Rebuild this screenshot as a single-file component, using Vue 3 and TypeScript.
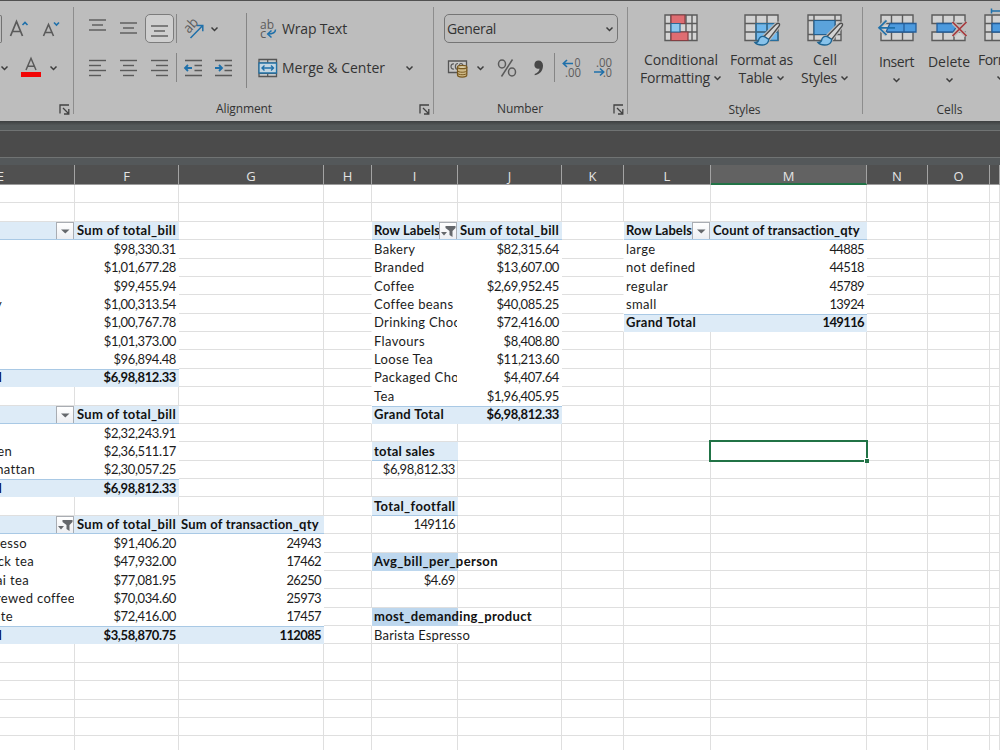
<script setup lang="ts">
type Kind = 'head' | 'body' | 'total' | 'fill' | 'strong'
interface Cell {
  text?: string
  kind?: Kind
  align?: 'right'
  bold?: boolean
  filter?: 'menu' | 'funnel'
  spill?: boolean
  end?: number
  width?: number
}

// Stretches or tightens a label's letter spacing so it fills the given width.
const vFit = {
  mounted(el: HTMLElement, binding: { value?: number }) {
    if (!binding.value || !el.textContent) return
    el.style.letterSpacing = '0'
    const natural = el.getBoundingClientRect().width
    el.style.letterSpacing = `${(binding.value - natural) / el.textContent.trim().length}px`
  },
}

const columns = ['E', 'F', 'G', 'H', 'I', 'J', 'K', 'L', 'M', 'N', 'O', '']
const rowCount = 31
const cells: Record<string, Cell> = {}

function put(col: string, row: number, cell: Cell) {
  cells[col + row] = cell
}

function pivot(first: string, others: string[], top: number, heads: [string, number][], filter: 'menu' | 'funnel', rows: (string | number)[][], total: string[], firstHead = '') {
  put(first, top, { text: firstHead, kind: 'head', filter, width: 66 })
  others.forEach((c, i) => put(c, top, { text: heads[i][0], kind: 'head', width: heads[i][1] }))
  rows.forEach((r, n) => {
    const y = top + 1 + n
    const end = first === 'E' ? Number(r[r.length - 1]) : undefined
    put(first, y, { text: String(r[0]), kind: 'body', end })
    others.forEach((c, i) => put(c, y, { text: String(r[i + 1]), kind: 'body', align: 'right' }))
  })
  const y = top + 1 + rows.length
  put(first, y, { text: total[0], kind: 'total', end: first === 'E' ? 2 : undefined, width: first === 'E' ? undefined : 70 })
  others.forEach((c, i) => put(c, y, { text: total[i + 1], kind: 'total', align: 'right' }))
}

pivot('E', ['F'], 2, [['Sum of total_bill', 99]], 'menu', [
  ['', '$98,330.31', 0], ['', '$1,01,677.28', 0], ['', '$99,455.94', 0], ['y', '$1,00,313.54', 3],
  ['', '$1,00,767.78', 0], ['', '$1,01,373.00', 0], ['', '$96,894.48', 0],
], ['l', '$6,98,812.33'])
pivot('E', ['F'], 12, [['Sum of total_bill', 99]], 'menu', [
  ['', '$2,32,243.91', 0], ['en', '$2,36,511.17', 13], ['hattan', '$2,30,057.25', 36],
], ['l', '$6,98,812.33'])
pivot('E', ['F', 'G'], 18, [['Sum of total_bill', 99], ['Sum of transaction_qty', 138]], 'funnel', [
  ['resso', '$91,406.20', '24943', 28], ['ck tea', '$47,932.00', '17462', 35], ['ai tea', '$77,081.95', '26250', 30],
  ['rewed coffee', '$70,034.60', '25973', 76], ['ate', '$72,416.00', '17457', 14],
], ['l', '$3,58,870.75', '112085'])
pivot('I', ['J'], 2, [['Sum of total_bill', 99]], 'funnel', [
  ['Bakery', '$82,315.64'], ['Branded', '$13,607.00'], ['Coffee', '$2,69,952.45'], ['Coffee beans', '$40,085.25'],
  ['Drinking Choc', '$72,416.00'], ['Flavours', '$8,408.80'], ['Loose Tea', '$11,213.60'],
  ['Packaged Cho', '$4,407.64'], ['Tea', '$1,96,405.95'],
], ['Grand Total', '$6,98,812.33'], 'Row Labels')
pivot('L', ['M'], 2, [['Count of transaction_qty', 147]], 'menu', [
  ['large', '44885'], ['not defined', '44518'], ['regular', '45789'], ['small', '13924'],
], ['Grand Total', '149116'], 'Row Labels')

put('I', 14, { text: 'total sales', kind: 'head', width: 61 })
put('I', 15, { text: '$6,98,812.33', align: 'right' })
put('I', 17, { text: 'Total_footfall', kind: 'head', width: 81 })
put('I', 18, { text: '149116', align: 'right' })
put('I', 20, { text: 'Avg_bill_per_person', kind: 'strong', spill: true, width: 124 })
put('I', 21, { text: '$4.69', align: 'right' })
put('I', 23, { text: 'most_demanding_product', kind: 'strong', spill: true, width: 158 })
put('I', 24, { text: 'Barista Espresso', spill: true, width: 96 })

const grid = Array.from({ length: rowCount }, (_, r) =>
  columns.map((c, i) => {
    const cell = cells[c + r] ?? {}
    const right = cells[columns[i + 1] + r]
    const below = cells[c + (r + 1)]
    return {
      ...cell,
      key: (c || 'P') + r,
      classes: [
        cell.kind ?? 'plain',
        {
          right: cell.align === 'right',
          money: cell.text?.startsWith('$'),
          spill: cell.spill,
          tail: cell.end !== undefined,
          'no-right': cell.kind || cell.spill || right?.kind,
          'no-bottom': !cell.kind && below?.kind === 'head',
          active: c === 'M' && r === 14,
        },
      ],
    }
  }),
).flat()

const lineSets: Record<string, number[][]> = {
  top: [[0, 17], [3, 14], [0, 17]],
  left: [[0, 17], [0, 12], [0, 17], [0, 12]],
  center: [[0, 17], [3, 14], [0, 17], [3, 14]],
  right: [[0, 17], [5, 17], [0, 17], [5, 17]],
}
</script>

<template>
  <div class="window">
    <div class="ribbon">
      <section class="group font-group">
        <div class="row r1">
          <i class="combo-end"></i>
          <svg width="22" height="22" viewBox="0 0 22 22"><path d="M1.500 18 7.500 3.500 13.500 18M3.700 13.500h7.600" class="ink" stroke-width="1.700"/><path d="m13.500 7 2.500-2.500L18.500 7" class="blue" stroke-width="1.600"/></svg>
          <svg width="22" height="22" viewBox="0 0 22 22"><path d="M1.500 18 6.500 6.500l5 11.500M3.300 14.500h6.400" class="ink" stroke-width="1.600"/><path d="m12 4.500 2.500 2.500L17 4.500" class="blue" stroke-width="1.600"/></svg>
        </div>
        <div class="row r2">
          <svg class="chev" width="9" height="6" viewBox="0 0 9 6"><path d="m1.500 1.500 3 3 3-3"/></svg>
          <svg width="20" height="20" viewBox="0 0 20 20"><path d="M5 12 10 .300l5 11.700M6.800 8.300h6.500" class="ink" stroke-width="1.500"/><path d="M0 14h20v5H0z" fill="#f20505"/></svg>
          <svg class="chev" width="9" height="6" viewBox="0 0 9 6"><path d="m1.500 1.500 3 3 3-3"/></svg>
        </div>
        <footer><span></span><svg class="launch" width="11" height="11" viewBox="0 0 11 11"><path d="M1 9.500V1h9M4 4l5.500 5.500M9.800 5v5H5"/></svg></footer>
      </section>

      <section class="group align-group">
        <div class="align-left">
          <div class="row r1">
            <span v-for="(k, n) in 3" :key="k" class="slot" :class="{ pressed: n === 2 }">
              <svg width="18" height="16" viewBox="0 0 18 16">
                <path v-for="(l, i) in lineSets.top" :key="i" :d="`M${l[0]} ${n * 3 - 1 + i * 5}H${l[1]}`" class="ink" stroke-width="1.400"/>
              </svg>
            </span>
            <i class="divider"></i>
            <svg class="orient" width="24" height="24" viewBox="0 0 24 24"><text x="0" y="0" transform="translate(6 17) rotate(-47)" class="glyph" font-size="14" textLength="15" lengthAdjust="spacingAndGlyphs">ab</text><path d="M7.500 21 19.500 8.800M14 8.500h5.800v5.800" class="blue" stroke-width="1.500"/></svg>
            <svg class="chev" width="9" height="6" viewBox="0 0 9 6"><path d="m1.500 1.500 3 3 3-3"/></svg>
          </div>
          <div class="row r2">
            <span v-for="k in ['left', 'center', 'right']" :key="k" class="slot">
              <svg width="18" height="18" viewBox="0 0 18 18"><path v-for="(l, i) in lineSets[k]" :key="i" :d="`M${l[0]} ${1.5 + i * 5}H${l[1]}`" class="ink" stroke-width="1.400"/></svg>
            </span>
            <i class="divider"></i>
            <svg class="indent" width="19" height="18" viewBox="0 0 19 18"><path d="M1 1.500h17M10.500 6.500H18M10.500 11.500H18M1 16.500h17" class="ink" stroke-width="1.400"/><path d="M8 9H1.200M4 6 1 9l3 3" class="blue" stroke-width="1.800"/></svg>
            <svg class="indent" width="19" height="18" viewBox="0 0 19 18"><path d="M1 1.500h17M10.500 6.500H18M10.500 11.500H18M1 16.500h17" class="ink" stroke-width="1.400"/><path d="M1 9h6.800M5 6l3 3-3 3" class="blue" stroke-width="1.800"/></svg>
          </div>
        </div>
        <div class="align-right">
          <div class="row r1">
            <svg width="20" height="20" viewBox="0 0 20 20"><text x="2" y="9.500" class="glyph" font-size="13" textLength="14" lengthAdjust="spacingAndGlyphs">ab</text><text x="2" y="18.500" class="glyph" font-size="13">c</text><path d="M17.500 10.500c0 3-2 4.500-8 4.500M13.500 11.500 9.700 15l3.800 3.500" class="blue" stroke-width="1.500"/></svg>
            <span v-fit="65" class="label">Wrap Text</span>
          </div>
          <div class="row r2">
            <svg width="20" height="20" viewBox="0 0 20 20"><path d="M1 1.500h17.500v17H1z" fill="#c6c9ca" stroke="#555" stroke-width="1.300"/><path d="M1 5h17M1 15.500h17M9.700 1.700V5M9.700 15.500v3" stroke="#555" stroke-width="1.200"/><path d="M1 5h17.500v10H1z" fill="#c3d6e2" stroke="#2372a5" stroke-width="1.300"/><path d="M4 10h11.500M6.500 7.500 4 10l2.500 2.500M13 7.500l2.500 2.500-2.500 2.500" class="blue" stroke-width="1.400"/></svg>
            <span v-fit="103" class="label">Merge &amp; Center</span>
            <svg class="chev" width="9" height="6" viewBox="0 0 9 6"><path d="m1.500 1.500 3 3 3-3"/></svg>
          </div>
        </div>
        <footer><span v-fit="56">Alignment</span><svg class="launch" width="11" height="11" viewBox="0 0 11 11"><path d="M1 9.500V1h9M4 4l5.500 5.500M9.800 5v5H5"/></svg></footer>
      </section>

      <section class="group number-group">
        <div class="row r1">
          <div class="combo"><span v-fit="49" class="label">General</span><svg class="chev" width="9" height="6" viewBox="0 0 9 6"><path d="m1.500 1.500 3 3 3-3"/></svg></div>
        </div>
        <div class="row r2">
          <svg width="22" height="20" viewBox="0 0 22 20"><path d="M1.500 3h18v11.500h-18z" fill="#c7c7c7" stroke="#555" stroke-width="1.300"/><path d="M7 6c-4-1-4 6 0 5M11 5.500c-3.500 0-3.500 6 0 6M12 8.500c0-4 4-4 4 0" class="ink" stroke-width="1.200"/><path d="M10.500 9v8c0 2.700 9.300 2.700 9.300 0V9" fill="#ceb987" stroke="#79591f" stroke-width="1.200"/><ellipse cx="15.150" cy="9" rx="4.650" ry="1.700" fill="#d8c9a1" stroke="#79591f" stroke-width="1.200"/><path d="M10.500 12.500c0 2.300 9.300 2.300 9.300 0M10.500 15c0 2.300 9.300 2.300 9.300 0" fill="none" stroke="#79591f"/></svg>
          <svg class="chev" width="9" height="6" viewBox="0 0 9 6"><path d="m1.500 1.500 3 3 3-3"/></svg>
          <svg width="20" height="20" viewBox="0 0 20 20"><ellipse cx="5" cy="6" rx="3.500" ry="4" class="ink" stroke-width="1.500"/><ellipse cx="15" cy="14" rx="3.500" ry="4" class="ink" stroke-width="1.500"/><path d="M15.500 1.500 4.500 18.500" class="ink" stroke-width="1.500"/></svg>
          <svg width="12" height="18" viewBox="0 0 12 18"><path d="M5.500 1.500a4.200 4.200 0 0 0-.8 8.300c.7.150 1.300 0 1.800-.300C6.500 12 4.700 14 1.700 15v1.300C7.200 15.300 10 11.500 10 6.500c0-3-1.800-5-4.500-5z" fill="#484848"/></svg>
          <i class="divider"></i>
          <svg width="20" height="22" viewBox="0 0 20 22"><text x="12.500" y="10" class="glyph" font-size="12" textLength="6" lengthAdjust="spacingAndGlyphs">0</text><text x="3" y="19.500" class="glyph" font-size="12" textLength="16" lengthAdjust="spacingAndGlyphs">.00</text><path d="M11 6.500H1.500M5 3 1.300 6.500 5 10" class="blue" stroke-width="1.600"/></svg>
          <svg width="20" height="22" viewBox="0 0 20 22"><text x="3" y="10" class="glyph" font-size="12" textLength="16" lengthAdjust="spacingAndGlyphs">.00</text><text x="10" y="19.500" class="glyph" font-size="12" textLength="9" lengthAdjust="spacingAndGlyphs">.0</text><path d="M1 15h9.500M7 11.500l3.700 3.500L7 18.500" class="blue" stroke-width="1.600"/></svg>
        </div>
        <footer><span v-fit="46">Number</span><svg class="launch" width="11" height="11" viewBox="0 0 11 11"><path d="M1 9.500V1h9M4 4l5.500 5.500M9.800 5v5H5"/></svg></footer>
      </section>

      <section class="group styles-group">
        <div class="big">
          <svg width="36" height="36" viewBox="0 0 36 36"><path d="M2 2h32v25.500H2z" fill="#d4d4d4"/><path d="M8 2v25.500M14 2v25.500M23 2v25.500M29 2v25.500M2 10.500h32M2 19h32" class="table-line"/><path d="M2 2h32v25.500H2z" class="table-line"/><path d="M8 2h14v8.500H8zM8 19h17v8.500H8z" fill="#df6d72" stroke="#843f43" stroke-width="1.200"/><path d="M8 10.500h9V19H8z" fill="#8fc7ed" stroke="#2b6a98" stroke-width="1.200"/></svg>
          <span v-fit="74" class="label">Conditional</span>
          <span class="line"><span v-fit="70" class="label">Formatting</span><svg class="chev" width="9" height="6" viewBox="0 0 9 6"><path d="m1.500 1.500 3 3 3-3"/></svg></span>
        </div>
        <div class="big">
          <svg width="40" height="36" viewBox="0 0 40 36"><path d="M3 2h33v25.500H3z" fill="#d2d2d2"/><path d="M14 10.500h22v17H14z" fill="#6fb8ed"/><path d="M14 2v25.500M25 2v25.500M3 10.500h33M3 19h33M3 2h33v25.500H3z" class="table-line"/><path d="M14 27.500v-17h22M25 10.500v17M14 19h22M25 27.500h11V19" fill="none" stroke="#276f9f" stroke-width="1.200"/><path d="M37 10.500c1 .8.500 2-.3 3L26.500 26.700 22 23.500 33.300 12c1.200-1.300 2.500-2.200 3.700-1.500z" fill="#d4d4d4" stroke="#bcbcbc" stroke-width="3.500"/><path d="M37 10.500c1 .8.500 2-.3 3L26.500 26.700 22 23.500 33.300 12c1.200-1.300 2.500-2.200 3.700-1.500z" fill="#d4d4d4" stroke="#4d4d4d" stroke-width="1.300"/><path d="M22 23.500c-3.500-.6-5 1.500-5.500 4-.4 1.500-1.500 2-3.500 2 2.500 3 10.500 4 13-.5.700-1.300.8-2 .5-2.800z" fill="#88c3eb" stroke="#1e6492" stroke-width="1.400"/></svg>
          <span v-fit="63" class="label">Format as</span>
          <span class="line"><span v-fit="34" class="label">Table</span><svg class="chev" width="9" height="6" viewBox="0 0 9 6"><path d="m1.500 1.500 3 3 3-3"/></svg></span>
        </div>
        <div class="big">
          <svg width="40" height="36" viewBox="0 0 40 36"><path d="M3 2h33v25.500H3z" fill="#d2d2d2"/><path d="M9 2v25.500M30 2v25.500M3 7.500h33M3 21.500h33M3 2h33v25.500H3z" class="table-line"/><path d="M9 7.500h21v14H9z" fill="#5ba3db" stroke="#245f8e" stroke-width="1.200"/><path d="M37 10.500c1 .8.500 2-.3 3L26.500 26.700 22 23.500 33.300 12c1.200-1.300 2.500-2.200 3.700-1.500z" fill="#d4d4d4" stroke="#bcbcbc" stroke-width="3.500"/><path d="M37 10.500c1 .8.500 2-.3 3L26.500 26.700 22 23.500 33.300 12c1.200-1.300 2.500-2.200 3.700-1.500z" fill="#d4d4d4" stroke="#4d4d4d" stroke-width="1.300"/><path d="M22 23.500c-3.500-.6-5 1.500-5.500 4-.4 1.500-1.500 2-3.500 2 2.500 3 10.500 4 13-.5.700-1.300.8-2 .5-2.800z" fill="#88c3eb" stroke="#1e6492" stroke-width="1.400"/></svg>
          <span v-fit="24" class="label">Cell</span>
          <span class="line"><span v-fit="36" class="label">Styles</span><svg class="chev" width="9" height="6" viewBox="0 0 9 6"><path d="m1.500 1.500 3 3 3-3"/></svg></span>
        </div>
        <footer><span v-fit="32">Styles</span></footer>
      </section>

      <section class="group cells-group">
        <div class="big low">
          <svg width="40" height="36" viewBox="0 0 40 36"><path d="M4 2h32v25.500H4z" fill="#d2d2d2"/><path d="M14.500 2v25.500M25.500 2v25.500M4 10.500h32M4 19h32M4 2h32v25.500H4z" class="table-line"/><path d="M13 10.500h26V19H9z" fill="#4c9ade" stroke="#245f9b" stroke-width="1.300"/><path d="M27 10.500V19" stroke="#245f9b" stroke-width="1.300"/><path d="M9.500 7.500 2 14.800 9.500 22" fill="none" stroke="#bdbdbd" stroke-width="4"/><path d="M18 14.800H1.500M9.500 7.500 2 14.800 9.500 22" class="blue" stroke-width="1.700"/></svg>
          <span v-fit="35" class="label">Insert</span>
          <svg class="chev" width="9" height="6" viewBox="0 0 9 6"><path d="m1.500 1.500 3 3 3-3"/></svg>
        </div>
        <div class="big low">
          <svg width="40" height="36" viewBox="0 0 40 36"><path d="M3 2h33v8.500H3zM3 19h33v8.500H3z" fill="#d2d2d2" class="table-line-fill"/><path d="M14 2v8.500M25 2v8.500M14 19v8.500M25 19v8.500" class="table-line"/><path d="M8 10.500h16l3 4-3 4.500H8z" fill="#4c9ade" stroke="#245f9b" stroke-width="1.300"/><path d="m24 9.500 13 13m0-13-13 13" stroke="#bdbdbd" stroke-width="4"/><path d="m23.500 9 14 14m0-14-14 14" stroke="#a8393d" stroke-width="1.700"/></svg>
          <span v-fit="42" class="label">Delete</span>
          <svg class="chev" width="9" height="6" viewBox="0 0 9 6"><path d="m1.500 1.500 3 3 3-3"/></svg>
        </div>
        <div class="big format">
          <svg width="36" height="36" viewBox="0 0 36 36"><path d="M3 2h32v25.500H3z" fill="#d2d2d2"/><path d="M10 2v25.500M3 10.500h32M3 19h32M3 2h32v25.500H3z" class="table-line"/><path d="M10 10.500h18V19H10z" fill="#4c9ade" stroke="#245f9b" stroke-width="1.300"/><path d="M9.500-2h20M9.500-4.500v5" class="blue" stroke-width="1.500"/></svg>
          <span v-fit="44" class="label">Format</span>
          <svg class="chev" width="9" height="6" viewBox="0 0 9 6"><path d="m1.500 1.500 3 3 3-3"/></svg>
        </div>
        <footer><span v-fit="26">Cells</span></footer>
      </section>
    </div>

    <div class="strip"></div>
    <div class="formula-bar"></div>
    <div class="strip lower"></div>

    <div class="sheet headers">
      <div v-for="c in columns" :key="c" class="col-head" :class="{ current: c === 'M', first: c === 'E' }">{{ c }}</div>
    </div>
    <div class="sheet body-grid">
      <div v-for="c in grid" :key="c.key" class="cell" :class="c.classes">
        <span v-if="c.text" v-fit="c.width" class="text" :style="c.end !== undefined ? { marginRight: `${75 - c.end}px` } : undefined">{{ c.text }}</span>
        <span v-if="c.filter" class="filter">
          <svg v-if="c.filter === 'menu'" width="16" height="16" viewBox="0 0 16 16"><path d="M4 6.500h8.500L8.250 10.500z" fill="#65686c"/></svg>
          <svg v-else width="16" height="16" viewBox="0 0 16 16"><path d="M5.500 3h10v2l-3 3v6l-3-2V8l-4-3z" fill="#65686c"/><path d="M1 9h6L4 12.500z" fill="#65686c"/></svg>
        </span>
        <i v-if="c.key === 'M14'" class="selection"></i>
      </div>
    </div>
  </div>
</template>

<style scoped>
.window {
  width: 1000px;
  height: 750px;
  overflow: hidden;
  background: #fff;
  font-family: "Open Sans", "Noto Sans", sans-serif;
}
.ribbon {
  box-sizing: border-box;
  display: flex;
  height: 121px;
  border-top: 1px solid #515151;
  background: #bdbdbd;
  color: #333;
}
svg { display: block; flex: none; overflow: visible; }
.ink { fill: none; stroke: #5a5a5a; }
.blue { fill: none; stroke: #1f70aa; }
.glyph { fill: #5c5c5c; font-family: "Open Sans", sans-serif; }
.chev path { fill: none; stroke: #3d3d3d; stroke-width: 1.5; }
.launch path { fill: none; stroke: #424242; stroke-width: 1.3; }
.table-line { fill: none; stroke: #5b5b5b; stroke-width: 1.4; }
.table-line-fill { stroke: #5b5b5b; stroke-width: 1.4; }
.label { font-size: 14px; line-height: 19px; white-space: nowrap; display: inline-block; }
.group {
  position: relative;
  box-sizing: border-box;
  flex: none;
  height: 119px;
  padding-top: 8px;
  display: grid;
  grid-template-rows: 39px 39px 33px;
}
.group::after {
  content: "";
  position: absolute;
  right: 0;
  top: 6px;
  width: 1px;
  height: 107px;
  background: #8d8d8d;
}
.row { display: flex; align-items: center; height: 39px; }
.group footer {
  grid-row: 3;
  grid-column: 1 / -1;
  box-sizing: border-box;
  display: flex;
  justify-content: center;
  align-items: flex-start;
  height: 33px;
  padding-top: 14px;
  font-size: 12px;
  line-height: 16px;
}
.group footer .launch { position: absolute; right: 4px; bottom: 5px; }
.divider { width: 1px; height: 29px; background: #858585; }

.font-group { width: 74px; }
.combo-end { width: 1px; height: 26px; border: 1px solid #727272; border-left: 0; border-radius: 0 5px 5px 0; margin-right: 7px; }
.font-group .r1 svg + svg { margin-left: 11px; margin-right: 8px; }
.font-group .r2 svg:nth-child(2) { margin: 0 8px 0 12px; }

.align-group { width: 360px; grid-template-columns: 172px 1fr; }
.align-group footer { padding-right: 20px; }
.align-left { grid-row: 1 / 3; position: relative; }
.align-left::after { content: ""; position: absolute; right: -1px; top: 4px; height: 75px; width: 1px; background: #858585; }
.align-left .row { padding-left: 9px; }
.slot { box-sizing: border-box; width: 29px; height: 29px; margin-right: 2px; display: grid; place-items: center; border: 1px solid transparent; border-radius: 5px; flex: none; }
.slot.pressed { background: #cfcfcf; border-color: #7c7c7c; }
.slot + .divider { margin-right: 6px; }
.orient + .chev { margin-left: 3px; }
.indent { margin-right: 12px; margin-left: 1px; }
.indent + .indent { margin-left: -1px; }
.align-right { grid-row: 1 / 3; grid-column: 2; padding-left: 12px; }
.align-right .label { margin-left: 4px; }
.align-right .chev { margin-left: 20px; }

.number-group { width: 194px; }
.number-group footer { padding-right: 22px; }
.combo { box-sizing: border-box; width: 174px; height: 29px; margin-left: 10px; padding: 0 3px 0 2px; display: flex; align-items: center; justify-content: space-between; border: 1px solid #757575; border-radius: 5px; }
.number-group .r2 { padding-left: 13px; }
.number-group .r2 svg:nth-child(2) { margin: 0 12px 0 7px; }
.number-group .r2 svg:nth-child(4) { margin: 0 9px 0 16px; }
.number-group .divider + svg { margin-left: 7px; margin-right: 11px; }

.styles-group { width: 235px; grid-template-columns: 90px 71px 56px; padding-left: 8px; }
.big { grid-row: 1 / 3; display: flex; flex-direction: column; align-items: center; padding-top: 4px; }
.big > svg + .label { margin-top: 1px; }
.line { display: flex; align-items: center; gap: 4px; margin-top: -1px; }
.line .chev { margin-left: -1px; }
.big.low > .label { margin-top: 3px; }
.big.low > .chev, .big.format > .chev { margin-top: 6px; }
.styles-group footer { padding-top: 15px; padding-left: 2px; padding-right: 2px; }

.cells-group { width: 172px; padding-left: 7px; grid-template-columns: 53px 52px 50px; }
.cells-group::after { display: none; }
.cells-group footer { padding-top: 15px; padding-left: 4px; }

.strip { height: 9px; background: linear-gradient(#3d3f40, #535859 50%); }
.formula-bar { height: 26px; border-top: 1px solid #707373; border-bottom: 1px solid #707373; background: #4b4b4b; }
.strip.lower { height: 7px; background: #54585a; }

.sheet { display: grid; grid-template-columns: 75px 104px 145px 48px 86px 104px 62px 87px 156px 61px 62px 10px; }
.headers { height: 20px; grid-template-rows: 20px; }
.col-head {
  box-sizing: border-box;
  height: 20px;
  min-width: 0;
  border-right: 1px solid #a3a3a3;
  border-bottom: 1px solid #9c9c9c;
  background: #505050;
  color: #e4e4e4;
  font: 13px/22px "Open Sans", sans-serif;
  text-align: center;
  overflow: hidden;
}
.col-head.first { padding-right: 70px; direction: rtl; }
.col-head.current { background: #626262; border-bottom: 2px solid #217346; }
.body-grid { grid-template-rows: repeat(31, 18.39px); font-family: Lato, "Open Sans", sans-serif; font-size: 13px; color: #1c1c1c; }
.cell {
  position: relative;
  box-sizing: border-box;
  min-width: 0;
  display: flex;
  align-items: center;
  padding: 1px 2px 0;
  border-right: 1px solid #dfdfdf;
  border-bottom: 1px solid #dfdfdf;
  overflow: hidden;
  white-space: nowrap;
  letter-spacing: 0.35px;
}
.cell.right { justify-content: flex-end; letter-spacing: -0.62px; }
.cell.right.money { letter-spacing: -0.38px; }
.cell.tail { justify-content: flex-end; padding: 1px 0 0; }
.cell.spill, .cell.active { overflow: visible; z-index: 2; }
.cell.no-right { border-right-color: transparent; }
.cell.body { border-color: transparent; }
.cell.head, .cell.total, .cell.strong { font-weight: 700; color: #111; }
.cell.head { background: #ddebf7; border-right: 0; border-bottom-color: #a9c9e5; }
.cell.total { background: #ddebf7; border-right: 0; border-bottom-color: #ddebf7; box-shadow: inset 0 1px #a9c9e5; }
.cell.total.right { padding-right: 3px; }
.cell.strong { background: #bdd7ee; border-right: 0; border-bottom-color: #bdd7ee; }
.cell.total.tail { color: #10104d; }
.text { flex: none; display: inline-block; line-height: 17px; }
.filter {
  position: absolute;
  right: 1px;
  top: 0;
  width: 16px;
  height: 16px;
  border: 1px solid #a9adb3;
  background: linear-gradient(#fff, #eceef2);
}
.selection { position: absolute; left: -2px; top: -2px; right: -2px; bottom: -2px; border: 2px solid #217346; }
.selection::after { content: ""; position: absolute; right: -3px; bottom: -3px; width: 4px; height: 4px; border: 1px solid #fff; border-right: 0; border-bottom: 0; background: #217346; }
</style>

<style>
body { margin: 0; overflow: hidden; }
</style>
